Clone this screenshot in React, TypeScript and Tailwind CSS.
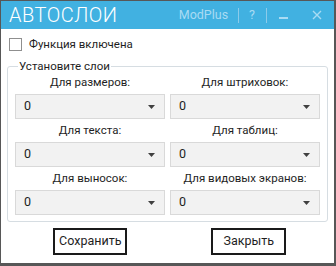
import { useState } from "react";

const fields = [
  ["Для размеров:", "Для штриховок:"],
  ["Для текста:", "Для таблиц:"],
  ["Для выносок:", "Для видовых экранов:"],
];

function Select({ value }: { value: string }) {
  return (
    <div className="flex h-[25px] items-center justify-between border border-[#d9d9d9] bg-[#f2f2f2] pl-[8px] pr-[9px] text-[12.5px] text-[#1e1e1e]">
      <span>{value}</span>
      <svg width="7" height="4" viewBox="0 0 7 4" className="fill-[#404040]">
        <path d="M0 0h7L3.5 4z" />
      </svg>
    </div>
  );
}

export default function App() {
  const [enabled, setEnabled] = useState(false);

  return (
    <div
      className="flex h-[266px] w-[336px] flex-col border-t border-l border-r-[2px] border-b-[3px] border-[#575757] bg-white text-[#1e1e1e]"
      style={{ fontFamily: 'Roboto, "Noto Sans", sans-serif' }}
    >
      {/* Title bar */}
      <div className="flex h-[28px] shrink-0 items-center bg-[#41b1e1] pl-[8px] pr-[12px] text-white">
        <span className="text-[20px] font-light leading-none tracking-[0.5px]">АВТОСЛОИ</span>
        <div className="ml-auto flex items-center text-[#a9dbf3]">
          <span className="text-[12.5px] leading-none">ModPlus</span>
          <span className="mx-[10px] h-[15px] w-px bg-[#8ccbea]" />
          <span className="text-[12.5px] leading-none">?</span>
          <span className="ml-[11px] h-[15px] w-px bg-[#8ccbea]" />
          <span className="ml-[12px] mt-[5px] h-[2px] w-[9px] bg-[#a9dbf3]" />
          <svg width="10" height="10" viewBox="0 0 10 10" className="ml-[24px] stroke-[#a9dbf3]" strokeWidth="1.4">
            <path d="M1 1l8 8M9 1l-8 8" />
          </svg>
        </div>
      </div>

      {/* Body */}
      <div className="flex flex-1 flex-col px-[6px] pt-[8px]">
        <label className="flex cursor-pointer items-center gap-[7px] pl-[2px] text-[11.5px]">
          <button
            type="button"
            onClick={() => setEnabled((v) => !v)}
            className="h-[13px] w-[13px] border border-[#8f8f8f] bg-white"
          />
          <span className="leading-[14px]">Функция включена</span>
        </label>

        <fieldset className="mt-[8px] rounded-[3px] border border-[#d6dde2] px-[7px] pb-[6px]">
          <legend className="ml-[3px] px-[1px] text-[11.5px] leading-[14px]">Установите слои</legend>
          <div className="grid grid-cols-2 gap-x-[5px]">
            {fields.map((row, i) =>
              row.map((label) => (
                <div key={label} className={i === 0 ? "" : "pt-[2px]"}>
                  <div className="pb-[3px] text-center text-[11.5px] leading-[18px]">{label}</div>
                  <Select value="0" />
                </div>
              ))
            )}
          </div>
        </fieldset>

        <div className="mt-[6px] grid grid-cols-2">
          <div className="flex justify-center pl-[6px]">
            <button className="h-[27px] w-[74px] border-2 border-[#1a1a1a] bg-white text-[12.5px]">Сохранить</button>
          </div>
          <div className="flex justify-center pl-[2px]">
            <button className="h-[27px] w-[75px] border-2 border-[#1a1a1a] bg-white text-[12.5px]">Закрыть</button>
          </div>
        </div>
      </div>
    </div>
  );
}
